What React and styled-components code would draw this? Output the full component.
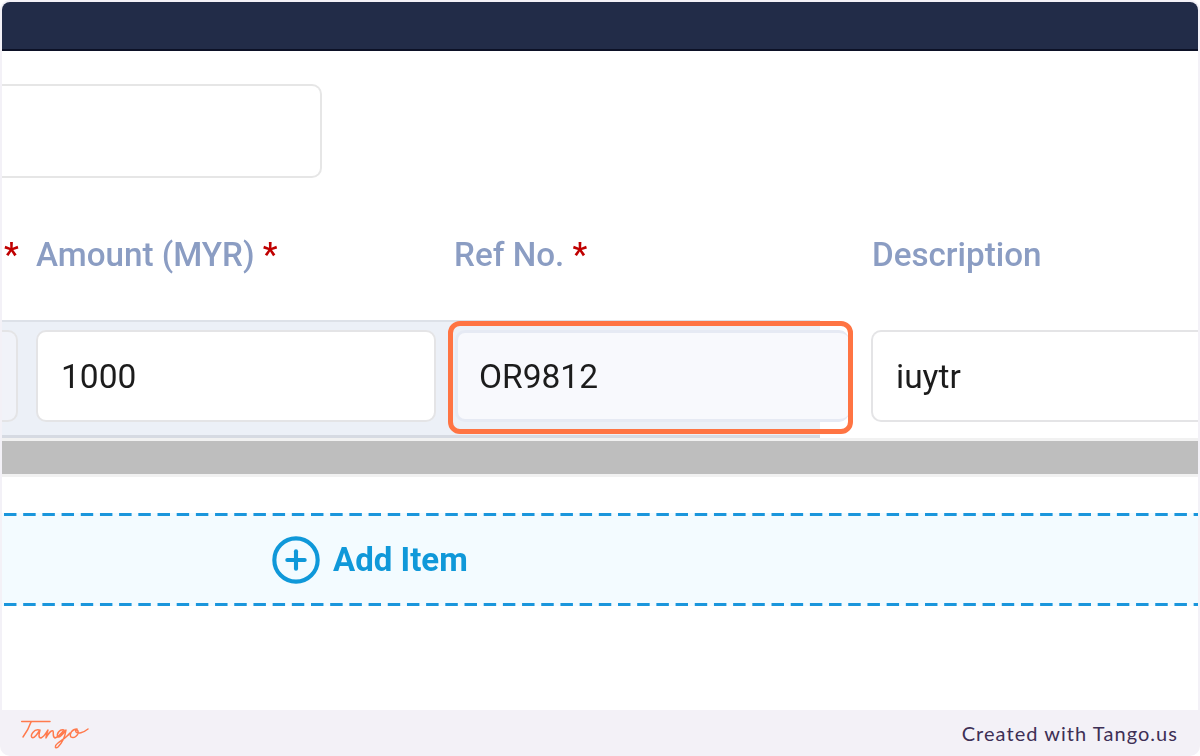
import styled, { createGlobalStyle } from "styled-components";
import { CirclePlus } from "lucide-react";

const GlobalStyle = createGlobalStyle`
  html, body {
    margin: 0;
    padding: 0;
    background: #fff;
  }
`;

const Frame = styled.div`
  width: 1200px;
  height: 756px;
  box-sizing: border-box;
  padding: 2px 2px 0;
  display: flex;
  flex-direction: column;
  overflow: hidden;
  background: #f3f1f7;
  border-radius: 10px;
  font-family: Roboto, "Liberation Sans", sans-serif;
`;

const Card = styled.div`
  flex: 1;
  min-height: 0;
  background: #fff;
  border-radius: 8px 8px 0 0;
  overflow: hidden;
`;

const Header = styled.div`
  height: 47px;
  background: #222c48;
  border-bottom: 2px solid #0c1126;
`;

const TopField = styled.div`
  width: 320px;
  height: 94px;
  box-sizing: border-box;
  margin-top: 33px;
  background: #fff;
  border: 2px solid #e6e6e6;
  border-left: 0;
  border-radius: 0 10px 10px 0;
`;

const Columns = styled.div`
  display: grid;
  grid-template-columns: 16px 401px 398px 1fr;
  column-gap: 18px;
`;

const LabelRow = styled(Columns)`
  height: 40px;
  margin-top: 57px;
  align-items: center;
`;

const Label = styled.div`
  font-size: 33.2px;
  font-weight: 500;
  line-height: 40px;
  color: #8b9dc3;
  white-space: nowrap;
  margin-left: ${(p) => p.$shift || "0"};
  filter: blur(0.45px);
`;

const Star = styled.span`
  color: #c00000;
`;

const TableRow = styled(Columns)`
  position: relative;
  height: 118px;
  box-sizing: border-box;
  margin-top: 45px;
  padding-top: 10px;
  background:
    linear-gradient(#dde1e8, #dde1e8) 0 0 / 818px 2px no-repeat,
    linear-gradient(#d6dae2, #d6dae2) 0 100% / 818px 3px no-repeat,
    linear-gradient(#ecf0f7, #ecf0f7) 0 0 / 818px 100% no-repeat;
`;

const Input = styled.div`
  width: ${(p) => p.$width || "auto"};
  height: 92px;
  box-sizing: border-box;
  padding-left: ${(p) => p.$pad || "23px"};
  display: flex;
  align-items: center;
  font-size: 33.5px;
  color: #1c1c1c;
  background: #fff;
  border: 2px solid #e4e4e6;
  border-radius: 10px;
`;

const InputText = styled.span`
  filter: blur(0.35px);
`;

const StubInput = styled(Input)`
  border-left: 0;
  border-radius: 0 10px 10px 0;
  background: #f1f3f9;
`;

const RefInput = styled(Input)`
  background: #f8f9fd;
  border: 3px solid #e6eaf4;
  border-right: 0;
`;

const OpenInput = styled(Input)`
  border-right: 0;
  border-radius: 10px 0 0 10px;
`;

const Highlight = styled.div`
  position: absolute;
  left: 446px;
  top: 1px;
  width: 405px;
  height: 113px;
  box-sizing: border-box;
  border: 5px solid #ff7443;
  border-radius: 12px;
`;

const ScrollTrack = styled.div`
  padding: 3px 0;
  background: #f1f1f1;
`;

const ScrollThumb = styled.div`
  height: 33px;
  background: #bebebe;
`;

const AddItemBar = styled.div`
  height: 93px;
  box-sizing: border-box;
  margin-top: 36px;
  padding-left: 268px;
  display: flex;
  align-items: center;
  gap: 11px;
  color: #0f98d9;
  background:
    linear-gradient(90deg, #1a96dc 12px, transparent 12px) 2px 0 / 19.2px 3px repeat-x,
    linear-gradient(90deg, #1a96dc 12px, transparent 12px) 2px 100% / 19.2px 3px repeat-x,
    #f3fbff;
`;

const AddItemText = styled.span`
  font-size: 33px;
  font-weight: 700;
  filter: blur(0.4px);
`;

const Footer = styled.div`
  height: 46px;
  flex: none;
  display: flex;
  align-items: center;
  justify-content: space-between;
  padding: 0 20px 0 17px;
`;

const FooterText = styled.span`
  font-family: Lato, "Open Sans", sans-serif;
  font-size: 20px;
  letter-spacing: 1.05px;
  color: #3d2f55;
`;

function TangoLogo() {
  return (
    <svg width="72" height="34" viewBox="0 0 72 34" fill="none" stroke="#ff7a4d" strokeWidth="1.5" strokeLinecap="round" strokeLinejoin="round">
      <path d="M2.7 5.5 H31" />
      <path d="M12 6 C10 12 7 17 4 21" />
      <path d="M20 14 C15 13 11 19 13 21.5 C15 23 19 17 21 14 C20 18 19 22 22 22 C25 21 27 17 29 14 C28 17 27 20 27 22 C29 18 32 14 34 15 C35 17 33 21 36 22 C39 21 42 18 45 14 C41 12.5 37 18 39 21 C41 22 44 18 47 14 C46 21 43 27 39 31 C36 33.5 35 30 39 27 C43 24 48 21 51 17" />
      <path d="M58 13 C53 13 50 18 52 21 C55 23 60 19 59 15 C58 13 56 14 57 16 C59 18 64 17 69 13" />
    </svg>
  );
}

export default function App() {
  return (
    <>
      <GlobalStyle />
      <Frame>
        <Card>
          <Header />
          <TopField />
          <LabelRow>
            <Label $shift="2px">
              <Star>*</Star>
            </Label>
            <Label>
              Amount (MYR) <Star>*</Star>
            </Label>
            <Label $shift="-1px">
              Ref No. <Star>*</Star>
            </Label>
            <Label $shift="1px">Description</Label>
          </LabelRow>
          <TableRow>
            <StubInput $pad="0" />
            <Input $width="400px">
              <InputText>1000</InputText>
            </Input>
            <RefInput $width="394px" $pad="21px">
              <InputText>OR9812</InputText>
            </RefInput>
            <OpenInput>
              <InputText>iuytr</InputText>
            </OpenInput>
            <Highlight />
          </TableRow>
          <ScrollTrack>
            <ScrollThumb />
          </ScrollTrack>
          <AddItemBar>
            <CirclePlus size={52} strokeWidth={1.9} />
            <AddItemText>Add Item</AddItemText>
          </AddItemBar>
        </Card>
        <Footer>
          <TangoLogo />
          <FooterText>Created with Tango.us</FooterText>
        </Footer>
      </Frame>
    </>
  );
}
